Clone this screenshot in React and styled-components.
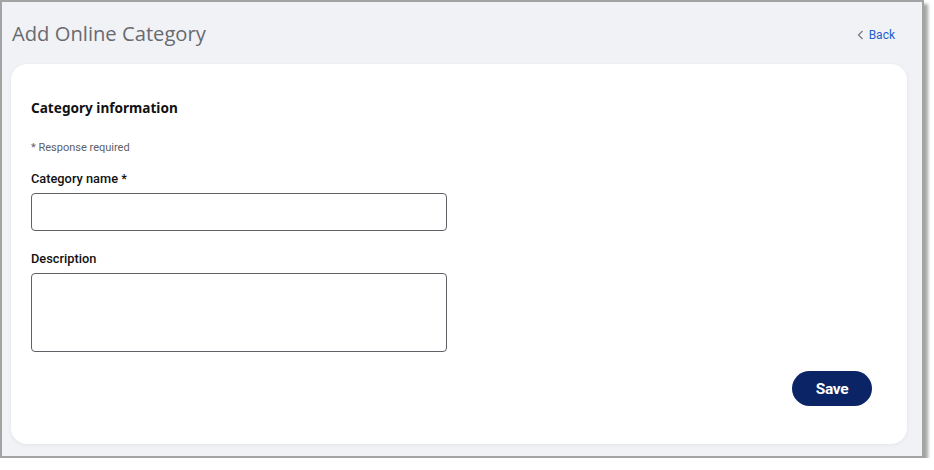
import React from "react";
import styled, { createGlobalStyle } from "styled-components";

const GlobalStyle = createGlobalStyle`
  html, body {
    margin: 0;
    padding: 0;
    background: #ffffff;
  }
  * {
    box-sizing: border-box;
  }
`;

const Frame = styled.div`
  width: 924px;
  height: 458px;
  border: 2px solid #a3a3a3;
  background: #f1f2f6;
  box-shadow: 4px 4px 3px rgba(0, 0, 0, 0.35);
  display: flex;
  flex-direction: column;
`;

const Header = styled.div`
  display: flex;
  align-items: center;
  justify-content: space-between;
  height: 62px;
  padding: 0 27px 0 10px;
`;

const PageTitle = styled.h1`
  margin: 0;
  font-family: "Open Sans", "Noto Sans", sans-serif;
  font-weight: 400;
  font-size: 20.2px;
  color: #686a70;
`;

const BackLink = styled.a`
  display: flex;
  align-items: center;
  gap: 5px;
  font-family: Roboto, "Liberation Sans", sans-serif;
  font-size: 12px;
  color: #1f5fd0;
  text-decoration: none;
  cursor: pointer;
  margin-top: 4px;

  svg {
    color: #7a7d84;
  }
`;

const Card = styled.div`
  flex: 1;
  margin: 0 15px 12px 9px;
  background: #ffffff;
  border-radius: 16px;
  box-shadow: 0 1px 4px rgba(0, 0, 0, 0.06);
  padding: 34px 35px 0 20px;
  display: flex;
  flex-direction: column;
`;

const SectionTitle = styled.h2`
  margin: 0;
  font-family: "Noto Sans", "Open Sans", sans-serif;
  font-weight: 700;
  font-size: 13.6px;
  line-height: 20px;
  color: #111111;
`;

const Hint = styled.div`
  margin-top: 22px;
  font-family: Roboto, "Liberation Sans", sans-serif;
  font-size: 11px;
  line-height: 16px;
  color: #5d6168;
`;

const Field = styled.div`
  display: flex;
  flex-direction: column;
  gap: 6px;
  margin-top: ${(p) => p.$top}px;
  width: 416px;
`;

const Label = styled.label`
  font-family: Roboto, "Liberation Sans", sans-serif;
  font-weight: 500;
  font-size: 12.8px;
  line-height: 16px;
  color: #111111;
`;

const TextInput = styled.input`
  height: 38px;
  width: 100%;
  border: 1px solid #5f6166;
  border-radius: 4px;
  padding: 0 10px;
  font-family: Roboto, "Liberation Sans", sans-serif;
  font-size: 13px;
  outline: none;
`;

const TextArea = styled.textarea`
  height: 79px;
  width: 100%;
  border: 1px solid #5f6166;
  border-radius: 4px;
  padding: 8px 10px;
  font-family: Roboto, "Liberation Sans", sans-serif;
  font-size: 13px;
  resize: none;
  outline: none;
  display: block;
`;

const Actions = styled.div`
  display: flex;
  justify-content: flex-end;
  margin-top: 19px;
`;

const SaveButton = styled.button`
  width: 80px;
  height: 35px;
  border: none;
  border-radius: 18px;
  background: #0b2466;
  color: #ffffff;
  font-family: Roboto, "Liberation Sans", sans-serif;
  font-weight: 700;
  font-size: 15.5px;
  letter-spacing: -0.3px;
  cursor: pointer;
`;

const ChevronLeft = () => (
  <svg width="7" height="10" viewBox="0 0 7 10" fill="none">
    <path d="M5.5 1 L1.5 5 L5.5 9" stroke="currentColor" strokeWidth="1.3" />
  </svg>
);

const App = () => {
  return (
    <>
      <GlobalStyle />
      <Frame>
        <Header>
          <PageTitle>Add Online Category</PageTitle>
          <BackLink>
            <ChevronLeft />
            Back
          </BackLink>
        </Header>
        <Card>
          <SectionTitle>Category information</SectionTitle>
          <Hint>* Response required</Hint>
          <Field $top={15}>
            <Label>Category name *</Label>
            <TextInput type="text" />
          </Field>
          <Field $top={20}>
            <Label>Description</Label>
            <TextArea />
          </Field>
          <Actions>
            <SaveButton>Save</SaveButton>
          </Actions>
        </Card>
      </Frame>
    </>
  );
};

export default App;
